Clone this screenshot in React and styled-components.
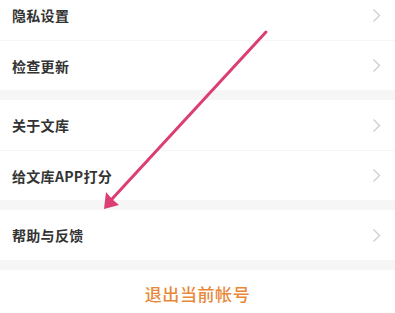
import styled, { createGlobalStyle } from "styled-components";

const GlobalStyle = createGlobalStyle`
  html, body {
    margin: 0;
    padding: 0;
    background: #f6f6f6;
    font-family: "Noto Sans CJK SC", "Noto Sans", sans-serif;
  }
`

const Page = styled.div`
  position: relative;
  width: 395px;
  height: 313px;
  overflow: hidden;
  background: #f6f6f6;
`

const List = styled.div`
  display: flex;
  flex-direction: column;
  gap: 10px;
  margin-top: -10px;
`

const Section = styled.div`
  display: flex;
  flex-direction: column;
  background: #fff;
`

const Row = styled.div`
  display: flex;
  align-items: center;
  justify-content: space-between;
  height: 50px;
  padding: 0 14px 0 12px;
  box-sizing: border-box;
  border-top: ${p => (p.first ? "none" : "1px solid #f6f6f6")};
`

const Label = styled.span`
  font-size: 14px;
  font-weight: 700;
  color: #333;
  letter-spacing: 0.3px;
`

const Chevron = styled.svg`
  width: 9px;
  height: 15px;
`

const Logout = styled.div`
  display: flex;
  align-items: center;
  justify-content: center;
  height: 50px;
  background: #fff;
  font-size: 17px;
  font-weight: 500;
  color: #e8893a;
  letter-spacing: 0.6px;
  padding-bottom: 4px;
  box-sizing: border-box;
`

const Arrow = styled.svg`
  position: absolute;
  left: 0;
  top: 0;
  pointer-events: none;
`

const sections = [
  ["隐私设置", "检查更新"],
  ["关于文库", "给文库APP打分"],
  ["帮助与反馈"],
]

function Item({ label, first }) {
  return (
    <Row first={first}>
      <Label>{label}</Label>
      <Chevron viewBox="0 0 9 15">
        <path d="M1.5 1.5 L7.5 7.5 L1.5 13.5" fill="none" stroke="#cfcfcf" strokeWidth="1.4" />
      </Chevron>
    </Row>
  )
}

export default function App() {
  return (
    <Page>
      <GlobalStyle />
      <List>
        {sections.map((items, i) => (
          <Section key={i}>
            {items.map((label, j) => (
              <Item key={label} label={label} first={j === 0} />
            ))}
          </Section>
        ))}
        <Logout>退出当前帐号</Logout>
      </List>
      <Arrow width="395" height="313" viewBox="0 0 395 313">
        <line x1="266" y1="32" x2="112" y2="199" stroke="#dc3d74" strokeWidth="3" strokeLinecap="round" />
        <path d="M104 209 L106 192 L112 199 L119 205 Z" fill="#dc3d74" />
      </Arrow>
    </Page>
  )
}
